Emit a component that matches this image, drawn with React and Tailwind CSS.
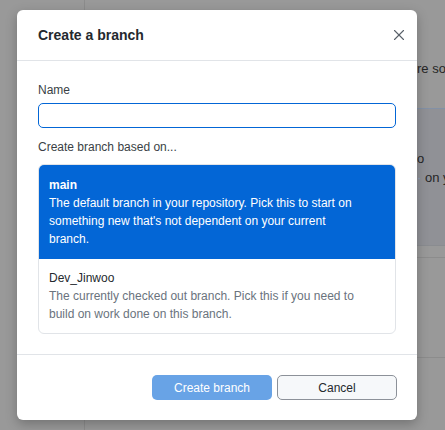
import { X } from "lucide-react";

export default function App() {
  /* Branch options */
  const branches = [
    {
      name: "main",
      lines: [
        "The default branch in your repository. Pick this to start on",
        "something new that's not dependent on your current",
        "branch.",
      ],
      selected: true,
    },
    {
      name: "Dev_Jinwoo",
      lines: [
        "The currently checked out branch. Pick this if you need to",
        "build on work done on this branch.",
      ],
      selected: false,
    },
  ];

  return (
    <div className="relative h-[430px] w-[445px] overflow-hidden bg-[#999999] font-['Liberation_Sans',Arial,sans-serif] text-[12px]">
      {/* Dimmed app behind the dialog */}
      <div className="flex h-full">
        <div className="w-[85px] shrink-0 border-r border-[#8c8c8c]" />
        <div className="flex min-w-0 flex-1 flex-col overflow-hidden">
          <div className="h-[108px] pl-[332px] pt-[59px] text-[13px] whitespace-nowrap text-[#262626]">
            re so
          </div>
          <div className="h-[138px] border-y border-[#8391a6] border-b-[#8a8c90] bg-[#909196] pl-[332px] pt-[40px] text-[13px] leading-[19px] whitespace-nowrap text-[#262626]">
            <div>o</div>
            <div>
              <span className="text-[#8da0bc]">·</span> on y
            </div>
          </div>
          <div className="h-[11px]" />
          <div className="h-[100px] border-t border-[#8c8c8c]" />
          <div className="border-t border-[#8c8c8c]" />
        </div>
      </div>

      {/* Dialog */}
      <div className="absolute left-[17px] top-[10px] w-[400px] rounded-[6px] bg-white shadow-[0_4px_12px_rgba(0,0,0,0.25)]">
        <div className="flex h-[51px] items-center justify-between border-b border-[#e1e4e8] pl-[21px] pr-[9px]">
          <h1 className="text-[14px] font-semibold text-[#24292e]">Create a branch</h1>
          <X className="h-[18px] w-[18px] text-[#586069]" strokeWidth={1.5} />
        </div>

        <div className="px-[21px] pb-[20px] pt-[21px]">
          <label className="block leading-[16px] text-[#3a3f45]">Name</label>
          <input className="mt-[5px] block h-[25px] w-full rounded-[5px] border border-[#0366d6] outline-none" />

          <p className="mt-[11px] leading-[16px] text-[#3a3f45]">Create branch based on...</p>

          <div className="mt-[9px] overflow-hidden rounded-[6px] border border-[#e1e4e8]">
            {branches.map((b) => (
              <div
                key={b.name}
                className={
                  b.selected
                    ? "bg-[#0366d6] px-[10px] py-[11px] leading-[18px] text-white"
                    : "px-[10px] py-[10px] leading-[18px] text-[#6a737d]"
                }
              >
                <div className={b.selected ? "font-semibold" : "text-[#24292e]"}>{b.name}</div>
                {b.lines.map((l) => (
                  <div key={l} className="whitespace-nowrap">
                    {l}
                  </div>
                ))}
              </div>
            ))}
          </div>
        </div>

        <div className="flex justify-end gap-[5px] border-t border-[#e1e4e8] px-[20px] py-[20px]">
          <button className="h-[25px] w-[120px] rounded-[5px] bg-[#68a3e6] text-white">
            Create branch
          </button>
          <button className="h-[25px] w-[120px] rounded-[5px] border border-[#8c9199] bg-[#f6f8fa] text-[#24292e]">
            Cancel
          </button>
        </div>
      </div>
    </div>
  );
}
